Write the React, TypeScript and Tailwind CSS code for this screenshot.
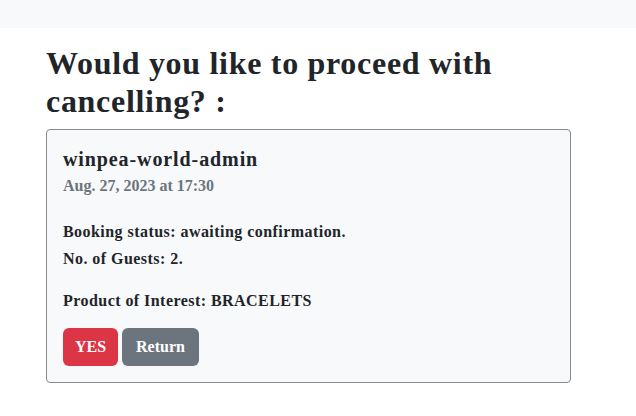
export default function App() {
  const serif = { fontFamily: '"Liberation Serif", "Times New Roman", serif' };
  return (
    <div className="min-h-[416px] bg-white text-[#212529]" style={serif}>
      <div className="h-[28px] bg-[#f8f9fa]" />
      <div className="pl-[46px] pr-[65px] pt-[16px]">
        <h2 className="text-[32px] leading-[38px] font-bold tracking-[0.7px] mb-[9px]">
          Would you like to proceed with
          <br />
          cancelling? :
        </h2>
        <div className="border border-[#8a8a8a] rounded-[4px] bg-[#f8f9fa] w-[525px] h-[254px] px-[16px] pt-[17px]">
          <h5 className="text-[20px] leading-[24px] font-bold tracking-[0.9px]">winpea-world-admin</h5>
          <div className="mt-[3px] text-[16px] leading-[24px] font-bold text-[#6c757d]">Aug. 27, 2023 at 17:30</div>
          <p className="mt-[22px] text-[16px] leading-[24px] font-bold tracking-[0.45px]">Booking status: awaiting confirmation.</p>
          <p className="mt-[3px] text-[16px] leading-[24px] font-bold tracking-[0.45px]">No. of Guests: 2.</p>
          <p className="mt-[18px] text-[16px] leading-[24px] font-bold tracking-[0.45px]">Product of Interest: BRACELETS</p>
          <div className="mt-[15px] flex gap-[4px]">
            <button className="h-[38px] w-[55px] rounded-[6px] bg-[#dc3545] text-white text-[16px] font-bold">YES</button>
            <button className="h-[38px] w-[77px] rounded-[6px] bg-[#6c757d] text-white text-[16px] font-bold">Return</button>
          </div>
        </div>
      </div>
    </div>
  );
}
